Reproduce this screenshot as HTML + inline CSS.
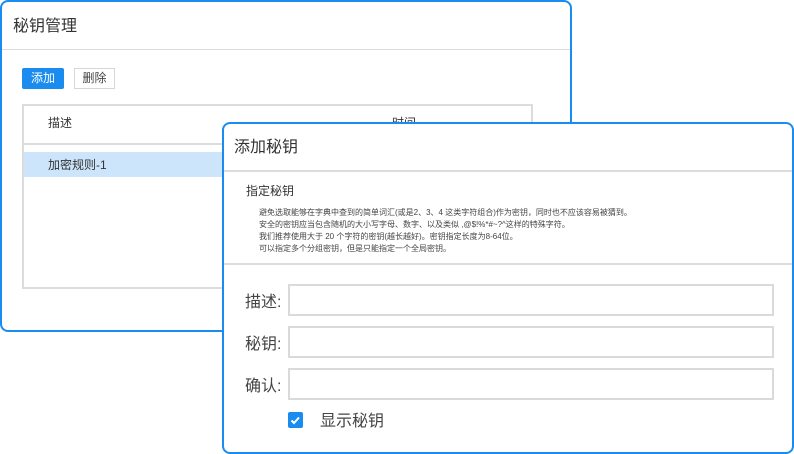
<!DOCTYPE html><html><head><meta charset="utf-8"><style>
*{margin:0;padding:0;box-sizing:border-box}
body{width:794px;height:454px;background:#fff;position:relative;overflow:hidden;font-family:"Liberation Sans","Noto Sans CJK SC",sans-serif;color:#333}
.a{position:absolute}
.p{border:2px solid #1a8cf0;border-radius:8px;background:#fff}
.in{position:absolute;left:288px;width:486px;height:32px;border:2px solid #dadada;background:#fff}
.lb{position:absolute;left:245px;font-size:16px;color:#444}
.s{position:absolute;left:259px;font-size:8px;color:#444;white-space:nowrap}
</style></head><body>
<div class="a p" style="left:0;top:0;width:572px;height:332px">
 <div class="a" style="left:11px;top:10px;font-size:16px;color:#333">秘钥管理</div>
 <div class="a" style="left:0;top:47px;width:568px;height:1px;background:#dcdcdc"></div>
 <div class="a" style="left:20px;top:66px;width:42px;height:21px;background:#1a8cf0;border-radius:2px;color:#fff;font-size:12px;text-align:center;line-height:21px">添加</div>
 <div class="a" style="left:72px;top:66px;width:41px;height:21px;border:1.5px solid #d6d6d6;font-size:12px;text-align:center;line-height:18px;color:#444">删除</div>
 <div class="a" style="left:20px;top:102px;width:511px;height:185px;border:2px solid #dcdcdc"></div>
 <div class="a" style="left:46px;top:112px;font-size:12px">描述</div>
 <div class="a" style="left:390px;top:112px;font-size:12px">时间</div>
 <div class="a" style="left:22px;top:141px;width:507px;height:2px;background:#dcdcdc"></div>
 <div class="a" style="left:22px;top:150px;width:507px;height:25px;background:#cce5fb"></div>
 <div class="a" style="left:46px;top:154px;font-size:12px">加密规则-1</div>
</div>
<div class="a p" style="left:222px;top:122px;width:572px;height:332px"></div>
<div class="a" style="left:234px;top:133px;font-size:16px">添加秘钥</div>
<div class="a" style="left:224px;top:170px;width:568px;height:2px;background:#dcdcdc"></div>
<div class="a" style="left:246px;top:182px;font-size:12px">指定秘钥</div>
<div class="s" style="top:207px">避免选取能够在字典中查到的简单词汇(或是2、3、4 这类字符组合)作为密钥，同时也不应该容易被猜到。</div>
<div class="s" style="top:219px">安全的密钥应当包含随机的大小写字母、数字、以及类似 ,@$!%*#~?^这样的特殊字符。</div>
<div class="s" style="top:231px">我们推荐使用大于 20 个字符的密钥(越长越好)。密钥指定长度为8-64位。</div>
<div class="s" style="top:243px">可以指定多个分组密钥，但是只能指定一个全局密钥。</div>
<div class="a" style="left:224px;top:263px;width:568px;height:2px;background:#dcdcdc"></div>
<div class="lb" style="top:288px">描述:</div><div class="in" style="top:284px"></div>
<div class="lb" style="top:330px">秘钥:</div><div class="in" style="top:326px"></div>
<div class="lb" style="top:372px">确认:</div><div class="in" style="top:368px"></div>
<div class="a" style="left:288px;top:412px;width:15px;height:16px;background:#1a8cf0;border-radius:2px">
<svg width="15" height="16" viewBox="0 0 15 16"><path d="M3.5 8.5l2.5 2.5 5-5.5" stroke="#fff" stroke-width="2" fill="none"/></svg></div>
<div class="a" style="left:320px;top:407px;font-size:16px;color:#444">显示秘钥</div>
</body></html>
